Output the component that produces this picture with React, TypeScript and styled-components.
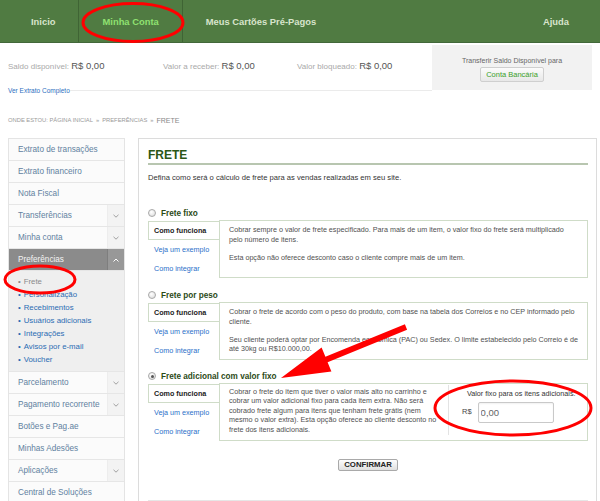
import React from "react";
import styled, { createGlobalStyle, css } from "styled-components";

const Global = createGlobalStyle`
  html, body { margin: 0; padding: 0; background: #fff; }
  body { font-family: "Liberation Sans", Arial, Helvetica, sans-serif; }
  * { box-sizing: border-box; }
`;

const Page = styled.div`
  position: relative;
  width: 600px;
  height: 501px;
  overflow: hidden;
`;

/* ---------- top navigation ---------- */
const NavBar = styled.nav`
  display: flex;
  height: 43px;
  padding: 0 8px;
  background: #507b42;
  border-bottom: 1px solid #42683a;
`;
const NavTab = styled.a<{ $active?: boolean }>`
  display: flex;
  align-items: center;
  padding: 0 23px;
  font-size: 9.4px;
  font-weight: bold;
  color: #d8e4cc;
  text-decoration: none;
  ${(p) =>
    p.$active &&
    css`
      color: #8fe171;
      border-left: 1px solid #3f6434;
      border-right: 1px solid #3f6434;
    `}
`;
const NavSpacer = styled.div`
  flex: 1;
`;

/* ---------- balance summary ---------- */
const Summary = styled.section`
  display: grid;
  grid-template-columns: 1fr 160px;
  margin-top: 2px;
  padding: 0 8px;
`;
const SummaryLeft = styled.div`
  display: flex;
  flex-direction: column;
`;
const Balances = styled.div`
  display: grid;
  grid-template-columns: 155px 134px 1fr;
  align-items: center;
  height: 41px;
`;
const Balance = styled.div`
  font-size: 8px;
  color: #a9a9a9;
  white-space: nowrap;
`;
const Amount = styled.span`
  font-size: 9.5px;
  color: #555;
`;
const ExtratoRow = styled.div`
  display: flex;
  align-items: center;
  height: 8px;
`;
const ExtratoLink = styled.a`
  font-size: 6.5px;
  color: #2d6fc0;
  text-decoration: none;
  white-space: nowrap;
`;
const Rule = styled.div`
  flex: 1;
  height: 1px;
  background: #ebebeb;
`;
const TransferBox = styled.div`
  display: flex;
  flex-direction: column;
  align-items: center;
  gap: 2px;
  height: 45px;
  padding-top: 11px;
  background: #f2f2f2;
`;
const TransferText = styled.div`
  font-size: 7px;
  line-height: 9px;
  color: #666;
`;
const BankButton = styled.button`
  height: 15px;
  padding: 0 5px;
  font-family: inherit;
  font-size: 7.5px;
  color: #3a9f2a;
  background: linear-gradient(#fbfbfb, #e8e8e8);
  border: 1px solid #cfcfcf;
  border-radius: 2px;
`;

/* ---------- breadcrumb ---------- */
const Breadcrumb = styled.div`
  display: flex;
  align-items: center;
  height: 10px;
  margin-top: 21px;
  padding: 0 8px;
  font-size: 5.8px;
  color: #9a9a9a;
  white-space: pre;
`;
const CrumbSep = styled.span`
  margin: 0 3px;
`;
const CrumbCurrent = styled.span`
  font-size: 7px;
  color: #888;
`;

/* ---------- body ---------- */
const Body = styled.div`
  display: flex;
  align-items: flex-start;
  gap: 13px;
  margin-top: 13px;
  padding: 0 8px;
`;

const Sidebar = styled.aside`
  width: 117px;
  flex: none;
  background: #fbfbfb;
  border: 1px solid #e4e4e4;
  border-bottom: none;
`;
const SideItem = styled.div<{ $open?: boolean }>`
  display: flex;
  height: 22px;
  border-bottom: 1px solid #e6e6e6;
  background: ${(p) => (p.$open ? "#8b8b8b" : "transparent")};
`;
const SideLabel = styled.a<{ $open?: boolean }>`
  flex: 1;
  display: flex;
  align-items: center;
  padding-left: 9px;
  font-size: 8.2px;
  color: ${(p) => (p.$open ? "#f2f2f2" : "#6181a0")};
  text-decoration: none;
  white-space: nowrap;
`;
const SideToggle = styled.span<{ $open?: boolean }>`
  width: 17px;
  display: flex;
  align-items: center;
  justify-content: center;
  background: ${(p) => (p.$open ? "#989898" : "#f3f3f3")};
  border-left: 1px solid ${(p) => (p.$open ? "#7e7e7e" : "#ededed")};
`;
const SubMenu = styled.ul`
  margin: 0;
  list-style: none;
  padding: 4px 0 5px 9px;
  background: #efefef;
  border-bottom: 1px solid #e6e6e6;
`;
const SubItem = styled.li<{ $current?: boolean }>`
  display: flex;
  align-items: center;
  height: 13px;
  font-size: 7.8px;
  color: ${(p) => (p.$current ? "#8a8a8a" : "#2b6db3")};
  white-space: nowrap;
  &::before {
    content: "•";
    margin-right: 3px;
  }
`;

const Main = styled.main`
  flex: 1;
  min-height: 380px;
  padding: 9px 8px 0 9px;
  border: 1px solid #dcdcdc;
  border-bottom: none;
`;
const Heading = styled.h2`
  margin: 0;
  padding-bottom: 1px;
  font-size: 12px;
  line-height: 14px;
  font-weight: bold;
  color: #2b5716;
  border-bottom: 2px solid #b8c6b0;
`;
const Intro = styled.p`
  margin: 8px 0 0;
  font-size: 7.6px;
  line-height: 10px;
  color: #333;
`;

const Option = styled.section<{ $gap: number }>`
  margin-top: ${(p) => p.$gap}px;
`;
const OptionTitle = styled.label`
  display: flex;
  align-items: center;
  gap: 5px;
  height: 12px;
  font-size: 8.2px;
  font-weight: bold;
  color: #2c4a17;
`;
const Radio = styled.span<{ $checked?: boolean }>`
  position: relative;
  width: 8px;
  height: 8px;
  border-radius: 50%;
  border: 1px solid #a8a8a8;
  background: radial-gradient(circle at 40% 35%, #ffffff, #d9d9d9);
  ${(p) =>
    p.$checked &&
    css`
      &::after {
        content: "";
        position: absolute;
        left: 1.5px;
        top: 1.5px;
        width: 3px;
        height: 3px;
        border-radius: 50%;
        background: #555;
      }
    `}
`;
const OptionBody = styled.div`
  display: flex;
  margin-top: 1px;
`;
const Tabs = styled.div`
  width: 71px;
  flex: none;
  display: flex;
  flex-direction: column;
  padding-top: 1px;
`;
const Tab = styled.a<{ $active?: boolean }>`
  display: flex;
  align-items: center;
  height: 19px;
  padding-left: 6px;
  font-size: 7.2px;
  color: #2a6fc9;
  text-decoration: none;
  white-space: nowrap;
  ${(p) =>
    p.$active &&
    css`
      font-weight: bold;
      color: #222;
      background: #fff;
      border: 1px solid #cfdcc8;
      border-right: none;
      padding-left: 5px;
    `}
`;
const Panel = styled.div<{ $split?: boolean }>`
  flex: 1;
  display: flex;
  border: 1px solid #cfdcc8;
  padding: ${(p) => (p.$split ? "0" : "4px 9px")};
  font-size: 7.2px;
  line-height: 9.6px;
  color: #505050;
`;
const TextCol = styled.div<{ $narrow?: boolean }>`
  ${(p) =>
    p.$narrow
      ? css`
          width: 228px;
          padding: 3px 9px;
          line-height: 9.4px;
        `
      : css`
          flex: 1;
        `}
`;
const Para = styled.p`
  margin: 0 0 8.4px;
  white-space: nowrap;
  &:last-child {
    margin-bottom: 0;
  }
`;
const FixedCol = styled.div`
  flex: 1;
  margin: 1px 0 5px;
  padding: 4px 0 0 13px;
  border-left: 1px solid #e3e3e3;
`;
const FixedLabel = styled.div`
  padding-left: 5px;
  font-size: 7.2px;
  line-height: 10px;
  color: #333;
  white-space: nowrap;
`;
const InputRow = styled.div`
  display: flex;
  align-items: center;
  gap: 6px;
  margin-top: 2.5px;
`;
const Currency = styled.span`
  font-size: 7.5px;
  color: #444;
`;
const MoneyInput = styled.input`
  width: 76px;
  height: 21px;
  padding: 0 2px;
  font-family: inherit;
  font-size: 9.5px;
  color: #666;
  border: 1px solid #c9c9c9;
  border-radius: 2px;
  box-shadow: inset 0 1px 2px rgba(0, 0, 0, 0.06);
  outline: none;
`;
const ConfirmRow = styled.div`
  display: flex;
  justify-content: center;
  margin-top: 18px;
`;
const ConfirmButton = styled.button`
  height: 12px;
  padding: 0 5px;
  font-family: inherit;
  font-size: 7.8px;
  line-height: 10px;
  font-weight: bold;
  color: #222;
  background: linear-gradient(#fdfdfd, #e0e0e0);
  border: 1px solid #a9a9a9;
  border-radius: 2px;
`;
const FooterRule = styled.div`
  height: 1px;
  margin-top: 29px;
  background: #e6e6e6;
`;

/* ---------- annotations ---------- */
const Annotations = styled.svg`
  position: absolute;
  left: 0;
  top: 0;
  width: 600px;
  height: 501px;
  pointer-events: none;
`;

const Chevron = ({ up, color }: { up?: boolean; color: string }) => (
  <svg width="6" height="4" viewBox="0 0 6 4">
    <path
      d={up ? "M0.5 3.5 L3 1 L5.5 3.5" : "M0.5 0.8 L3 3.2 L5.5 0.8"}
      fill="none"
      stroke={color}
      strokeWidth="1"
    />
  </svg>
);

const sideTop = [
  { label: "Extrato de transações" },
  { label: "Extrato financeiro" },
  { label: "Nota Fiscal" },
  { label: "Transferências", toggle: true },
  { label: "Minha conta", toggle: true },
];
const sideBottom = [
  { label: "Parcelamento", toggle: true },
  { label: "Pagamento recorrente", toggle: true },
  { label: "Botões e Pag.ae" },
  { label: "Minhas Adesões" },
  { label: "Aplicações", toggle: true },
  { label: "Central de Soluções" },
];
const subItems = [
  "Frete",
  "Personalização",
  "Recebimentos",
  "Usuários adicionais",
  "Integrações",
  "Avisos por e-mail",
  "Voucher",
];

const SideRow = ({ label, toggle }: { label: string; toggle?: boolean }) => (
  <SideItem>
    <SideLabel>{label}</SideLabel>
    {toggle && (
      <SideToggle>
        <Chevron color="#a0a0a0" />
      </SideToggle>
    )}
  </SideItem>
);

const OptionTabs = () => (
  <Tabs>
    <Tab $active>Como funciona</Tab>
    <Tab>Veja um exemplo</Tab>
    <Tab>Como integrar</Tab>
  </Tabs>
);

export default function App() {
  return (
    <Page>
      <Global />
      <NavBar>
        <NavTab>Inicio</NavTab>
        <NavTab $active>Minha Conta</NavTab>
        <NavTab>Meus Cartões Pré-Pagos</NavTab>
        <NavSpacer />
        <NavTab>Ajuda</NavTab>
      </NavBar>

      <Summary>
        <SummaryLeft>
          <Balances>
            <Balance>
              Saldo disponível: <Amount>R$ 0,00</Amount>
            </Balance>
            <Balance>
              Valor a receber: <Amount>R$ 0,00</Amount>
            </Balance>
            <Balance>
              Valor bloqueado: <Amount>R$ 0,00</Amount>
            </Balance>
          </Balances>
          <ExtratoRow>
            <ExtratoLink>Ver Extrato Completo</ExtratoLink>
            <Rule />
          </ExtratoRow>
        </SummaryLeft>
        <TransferBox>
          <TransferText>Transferir Saldo Disponível para</TransferText>
          <BankButton>Conta Bancária</BankButton>
        </TransferBox>
      </Summary>

      <Breadcrumb>
        ONDE ESTOU: PÁGINA INICIAL<CrumbSep>»</CrumbSep>PREFERÊNCIAS
        <CrumbSep>»</CrumbSep>
        <CrumbCurrent>FRETE</CrumbCurrent>
      </Breadcrumb>

      <Body>
        <Sidebar>
          {sideTop.map((s) => (
            <SideRow key={s.label} {...s} />
          ))}
          <SideItem $open>
            <SideLabel $open>Preferências</SideLabel>
            <SideToggle $open>
              <Chevron up color="#ffffff" />
            </SideToggle>
          </SideItem>
          <SubMenu>
            {subItems.map((s, i) => (
              <SubItem key={s} $current={i === 0}>
                {s}
              </SubItem>
            ))}
          </SubMenu>
          {sideBottom.map((s) => (
            <SideRow key={s.label} {...s} />
          ))}
        </Sidebar>

        <Main>
          <Heading>FRETE</Heading>
          <Intro>Defina como será o cálculo de frete para as vendas realizadas em seu site.</Intro>

          <Option $gap={24}>
            <OptionTitle>
              <Radio />
              Frete fixo
            </OptionTitle>
            <OptionBody>
              <OptionTabs />
              <Panel>
                <TextCol>
                  <Para>
                    Cobrar sempre o valor de frete especificado. Para mais de um item, o valor fixo do frete será multiplicado
                    <br />
                    pelo número de itens.
                  </Para>
                  <Para>Esta opção não oferece desconto caso o cliente compre mais de um item.</Para>
                </TextCol>
              </Panel>
            </OptionBody>
          </Option>

          <Option $gap={11}>
            <OptionTitle>
              <Radio />
              Frete por peso
            </OptionTitle>
            <OptionBody>
              <OptionTabs />
              <Panel>
                <TextCol>
                  <Para>
                    Cobrar o frete de acordo com o peso do produto, com base na tabela dos Correios e no CEP informado pelo
                    <br />
                    cliente.
                  </Para>
                  <Para>
                    Seu cliente poderá optar por Encomenda econômica (PAC) ou Sedex. O limite estabelecido pelo Correio é de
                    <br />
                    até 30kg ou R$10.000,00.
                  </Para>
                </TextCol>
              </Panel>
            </OptionBody>
          </Option>

          <Option $gap={10}>
            <OptionTitle>
              <Radio $checked />
              Frete adicional com valor fixo
            </OptionTitle>
            <OptionBody>
              <OptionTabs />
              <Panel $split>
                <TextCol $narrow>
                  <Para>
                    Cobrar o frete do item que tiver o valor mais alto no carrinho e
                    <br />
                    cobrar um valor adicional fixo para cada item extra. Não será
                    <br />
                    cobrado frete algum para itens que tenham frete grátis (nem
                    <br />
                    mesmo o valor extra). Esta opção oferece ao cliente desconto no
                    <br />
                    frete dos itens adicionais.
                  </Para>
                </TextCol>
                <FixedCol>
                  <FixedLabel>Valor fixo para os itens adicionais:</FixedLabel>
                  <InputRow>
                    <Currency>R$</Currency>
                    <MoneyInput defaultValue="0,00" />
                  </InputRow>
                </FixedCol>
              </Panel>
            </OptionBody>
          </Option>

          <ConfirmRow>
            <ConfirmButton>CONFIRMAR</ConfirmButton>
          </ConfirmRow>
          <FooterRule />
        </Main>
      </Body>

      <Annotations viewBox="0 0 600 501">
        <ellipse cx="133" cy="22.5" rx="50" ry="19" fill="none" stroke="#ff0000" strokeWidth="3" />
        <ellipse cx="40" cy="279.5" rx="35" ry="13.5" fill="none" stroke="#ff0000" strokeWidth="3" />
        <ellipse cx="513" cy="408" rx="78" ry="27" fill="none" stroke="#ff0000" strokeWidth="3" />
        <polygon
          points="404.9,324.2 325.4,356.7 321.6,347.5 281,378 331.4,371.5 327.6,362.3 407.1,329.8"
          fill="#ff0000"
        />
      </Annotations>
    </Page>
  );
}
